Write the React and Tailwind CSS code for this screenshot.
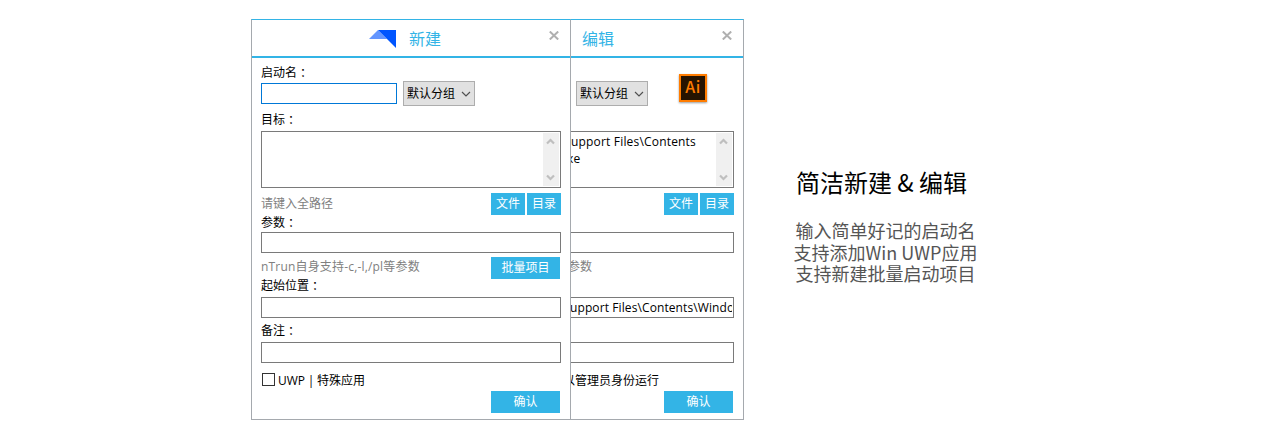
import React from 'react';

const Label = ({ className = '', colon = false, children }) => (
  <div className={`h-5 shrink-0 whitespace-nowrap leading-[21px] ${className}`}>
    {children}
    {colon && <span className="align-[-1px] font-['Noto_Sans_CJK_TC',sans-serif] leading-none">：</span>}
  </div>
);

const Button = ({ className = '', children }) => (
  <button className={`h-[22px] shrink-0 bg-[#33b4e6] text-xs leading-[22px] text-white ${className}`}>
    {children}
  </button>
);

const Chevron = ({ up = false, className = '' }) => (
  <svg className={className} width="10" height="6" viewBox="0 0 10 6" fill="none" stroke="currentColor" strokeWidth="1.15">
    <path d={up ? 'M1 5 5 1 9 5' : 'M1 1 5 5 9 1'} />
  </svg>
);

const ScrollArrow = ({ up = false }) => (
  <svg className="mr-px" width="9" height="7" viewBox="0 0 9 7" fill="none" stroke="#bfbfbf" strokeWidth="2.2">
    <path d={up ? 'M1 5.5 4.5 2 8 5.5' : 'M1 1.5 4.5 5 8 1.5'} />
  </svg>
);

const Close = () => (
  <svg className="mr-[11px] mt-[11px] shrink-0" width="10" height="9" viewBox="0 0 10 9" fill="none" stroke="#b0b0b0" strokeWidth="2">
    <path d="M.8.5l8.4 8M9.2.5l-8.4 8" />
  </svg>
);

const Select = () => (
  <div className="flex h-[25px] w-[72px] shrink-0 items-center justify-between border border-[#adadad] bg-[#e1e1e1] pl-[3px] pr-[3px]">
    <span className="whitespace-nowrap leading-[21px]">默认分组</span>
    <Chevron className="text-[#505050]" />
  </div>
);

const Field = ({ className = '', children }) => (
  <div className={`h-[21px] shrink-0 overflow-hidden whitespace-nowrap border-y border-r border-[#7a7a7a] leading-[19px] ${className}`}>
    {children}
  </div>
);

const TextArea = ({ className = '', children }) => (
  <div className={`flex h-[57px] shrink-0 justify-between overflow-hidden border-y border-r border-[#7a7a7a] p-px ${className}`}>
    <div className="whitespace-nowrap leading-[17px] tracking-[0.18px]">{children}</div>
    <div className="flex w-4 shrink-0 flex-col items-center justify-between bg-[#f0f0f0] py-[5px]">
      <ScrollArrow up />
      <ScrollArrow />
    </div>
  </div>
);

const Logo = () => (
  <svg className="shrink-0" width="27" height="18" viewBox="0 0 27 18">
    <path d="M0 9 9 0 18 9Z" fill="#6496ff" />
    <path d="M9 0H27V18Z" fill="#0055ff" />
  </svg>
);

const CreateWindow = () => (
  <section className="flex w-80 flex-col border border-t-[#33b4e6] border-x-[#a5a9ae] border-b-[#a5a9ae]">
    <header className="flex h-[38px] shrink-0 justify-between border-b-2 border-[#33b4e6]">
      <div className="flex items-center pl-[117px] pt-0.5 text-[#33b4e6]">
        <Logo />
        <h2 className="ml-[13px] text-base leading-5">新建</h2>
      </div>
      <Close />
    </header>
    <div className="flex flex-col pl-[9px] pt-1">
      <Label colon className="-mb-px">启动名</Label>
      <div className="flex h-[25px] items-center gap-[6px]">
        <div className="h-[21px] w-[136px] border border-[#0078d7]" />
        <Select />
      </div>
      <Label colon className="mb-[2px] mt-[3px]">目标</Label>
      <TextArea className="w-[300px] border-l" />
      <div className="mt-[5px] flex h-[22px] w-[300px] items-start justify-between">
        <Label className="text-[#808080]">请键入全路径</Label>
        <div className="flex gap-0.5">
          <Button className="w-[34px]">文件</Button>
          <Button className="w-[34px]">目录</Button>
        </div>
      </div>
      <Label colon className="-mt-[3px]">参数</Label>
      <Field className="w-[300px] border-l" />
      <div className="mt-1 flex h-[22px] w-[299px] items-start justify-between">
        <Label className="-mt-px tracking-[0.18px] text-[#808080]">nTrun自身支持-c,-l,/pl等参数</Label>
        <Button className="w-[69px]">批量项目</Button>
      </div>
      <Label colon className="-mt-1 mb-[2px]">起始位置</Label>
      <Field className="w-[300px] border-l" />
      <Label colon className="mb-[2px] mt-[2px]">备注</Label>
      <Field className="w-[300px] border-l" />
      <div className="mt-[7px] flex h-5 items-center pl-px">
        <span className="mb-px size-[13px] border border-[#333]" />
        <span className="ml-[3px] mt-px leading-[21px] [word-spacing:-0.4px]">UWP | 特殊应用</span>
      </div>
      <Button className="ml-[230px] mt-px w-[69px]">确认</Button>
    </div>
  </section>
);

const EditWindow = () => (
  <section className="flex w-[173px] flex-col overflow-hidden border-y border-r border-t-[#33b4e6] border-r-[#a5a9ae] border-b-[#a5a9ae]">
    <header className="flex h-[38px] shrink-0 justify-between border-b-2 border-[#33b4e6]">
      <h2 className="pl-[11px] pt-[9px] text-base leading-5 text-[#33b4e6]">编辑</h2>
      <Close />
    </header>
    <div className="flex flex-col">
      <div className="flex h-[73px] items-start pl-[5px]">
        <div className="mt-[23px]">
          <Select />
        </div>
        <div className="ml-[31px] mt-4 flex h-7 w-7 items-center justify-center border-2 border-[#ff7c00] bg-[#261300] pb-[5px] font-['Noto_Sans_CJK_SC',sans-serif] text-base font-medium leading-none tracking-[0.5px] text-[#ff7c00] shadow-[0_1px_2px_rgba(0,0,0,0.4)]">
          Ai
        </div>
      </div>
      <TextArea className="w-[163px]">
        <div className="-ml-px">upport Files\Contents</div>
        <div className="-ml-[5px]">xe</div>
      </TextArea>
      <div className="mt-[5px] flex w-[163px] justify-end gap-0.5">
        <Button className="w-[34px]">文件</Button>
        <Button className="w-[34px]">目录</Button>
      </div>
      <Field className="mt-[17px] w-[163px]" />
      <Label className="-ml-[3px] mb-px mt-[3px] text-[#808080]">参数</Label>
      <Field className="mt-5 w-[163px] pr-px">
        <div className="-ml-px w-[162px] overflow-hidden tracking-[0.1px]">upport Files\Contents\Windows</div>
      </Field>
      <Field className="mt-6 w-[163px]" />
      <Label className="-ml-2 mb-px mt-[7px]">以管理员身份运行</Label>
      <Button className="ml-[93px] w-[69px]">确认</Button>
    </div>
  </section>
);

export default function App() {
  return (
    <main className="flex h-[437px] w-[1280px] items-start overflow-hidden bg-white pl-[251px] pt-[19px] font-['Noto_Sans_CJK_SC',sans-serif]">
      <div className="flex h-[401px] text-xs text-black font-['Open_Sans','Noto_Sans_CJK_SC',sans-serif]">
        <CreateWindow />
        <EditWindow />
      </div>
      <div className="ml-[41px] flex w-[201px] flex-col items-center pt-[145px] text-center">
        <h1 className="-ml-2 whitespace-nowrap text-2xl leading-9 text-black">简洁新建 &amp; 编辑</h1>
        <p className="mt-5 whitespace-nowrap text-lg leading-[21.5px] text-[#555]">
          输入简单好记的启动名
          <br />
          支持添加Win UWP应用
          <br />
          支持新建批量启动项目
        </p>
      </div>
    </main>
  );
}
